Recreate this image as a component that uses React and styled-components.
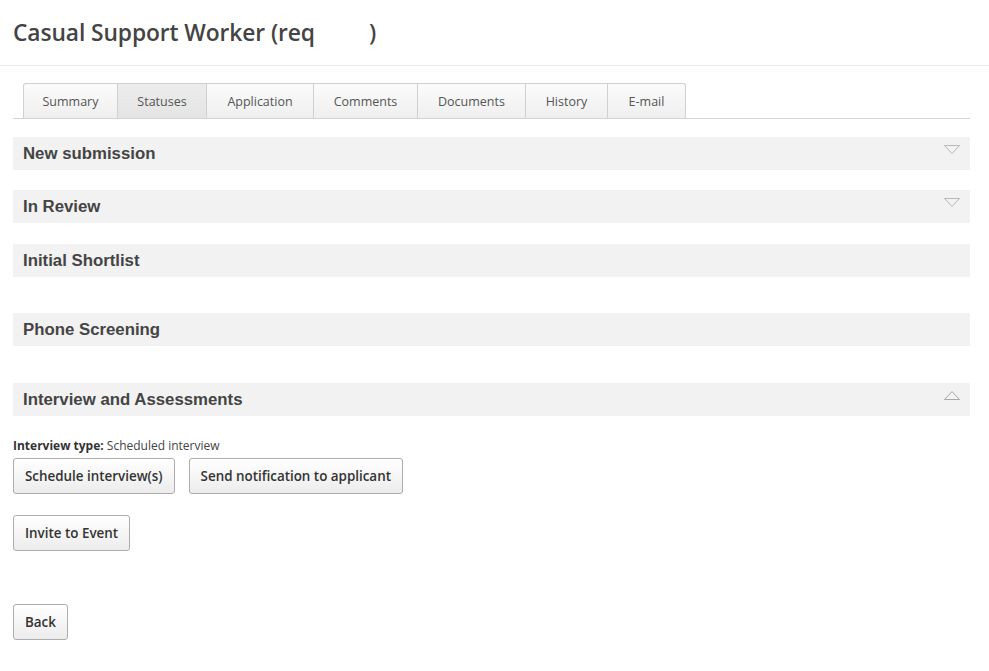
import React from "react";
import styled, { createGlobalStyle } from "styled-components";

const Global = createGlobalStyle`
  html, body { margin: 0; padding: 0; background: #fff; }
  body { font-family: "Open Sans", "Noto Sans", sans-serif; color: #444; }
`;

const Page = styled.div`
  width: 989px;
  min-height: 671px;
  box-sizing: border-box;
`;

const Header = styled.header`
  height: 66px;
  border-bottom: 1px solid #ececec;
  box-sizing: border-box;
  padding: 17px 13px 0;
`;

const Title = styled.h1`
  margin: 0;
  font-family: "Open Sans", sans-serif;
  font-weight: 600;
  font-size: 22.8px;
  line-height: 32px;
  color: #444;
  letter-spacing: -0.1px;
`;

const Hidden = styled.span`
  display: inline-block;
  width: 54px;
`;

const Body = styled.main`
  padding: 17px 19px 0 13px;
`;

const TabBar = styled.nav`
  display: flex;
  padding-left: 10px;
  border-bottom: 1px solid #d4d4d4;
  height: 35px;
`;

const Tab = styled.div`
  width: ${(p) => p.$w}px;
  box-sizing: border-box;
  display: flex;
  align-items: center;
  justify-content: center;
  border: 1px solid #d0d0d0;
  border-bottom: none;
  border-left-width: ${(p) => (p.$first ? 1 : 0)}px;
  border-radius: ${(p) => (p.$first ? "3px 0 0 0" : p.$last ? "0 3px 0 0" : "0")};
  background: ${(p) =>
    p.$active ? "linear-gradient(#ececec, #e4e4e4)" : "linear-gradient(#fbfbfb, #efefef)"};
  font-size: 12.5px;
  color: #555;
`;

const Sections = styled.div`
  display: flex;
  flex-direction: column;
  margin-top: 18px;
`;

const Section = styled.section`
  display: flex;
  flex-direction: column;
  margin-bottom: ${(p) => p.$gap}px;
`;

const SectionHead = styled.div`
  height: 33px;
  background: #f2f2f2;
  display: flex;
  align-items: center;
  justify-content: space-between;
  padding: 0 9px 0 10px;
  font-family: "Liberation Sans", Arial, sans-serif;
  font-weight: bold;
  font-size: 16.8px;
  color: #444;
`;

const Arrow = styled.svg`
  width: 18px;
  height: 11px;
  margin-top: -8px;
`;

const Content = styled.div`
  padding-top: 21px;
`;

const TypeLine = styled.div`
  font-size: 12px;
  color: #444;
  line-height: 18px;
  margin-bottom: 3px;
  b { font-weight: 700; color: #333; }
`;

const ButtonRow = styled.div`
  display: flex;
  gap: 14px;
  margin-bottom: ${(p) => p.$mb || 0}px;
`;

const Button = styled.button`
  height: 36px;
  padding: 0 11px;
  border: 1px solid #adadad;
  border-radius: 3px;
  background: linear-gradient(#ffffff, #ececec);
  font-family: "Open Sans", sans-serif;
  font-weight: 600;
  font-size: 13.4px;
  color: #333;
  cursor: pointer;
`;

const Down = () => (
  <Arrow viewBox="0 0 18 11">
    <path d="M1.5 1.5 H16.5 L9 9.5 Z" fill="none" stroke="#b8b8b8" strokeWidth="1" />
  </Arrow>
);
const Up = () => (
  <Arrow viewBox="0 0 18 11">
    <path d="M1.5 9.5 H16.5 L9 1.5 Z" fill="none" stroke="#a8a8a8" strokeWidth="1" />
  </Arrow>
);

const tabs = [
  ["Summary", 95],
  ["Statuses", 89],
  ["Application", 107],
  ["Comments", 104],
  ["Documents", 108],
  ["History", 82],
  ["E-mail", 78],
];

export default function App() {
  return (
    <Page>
      <Global />
      <Header>
        <Title>
          Casual Support Worker (req<Hidden />)
        </Title>
      </Header>
      <Body>
        <TabBar>
          {tabs.map(([t, w], i) => (
            <Tab key={t} $w={w} $first={i === 0} $last={i === tabs.length - 1} $active={t === "Statuses"}>
              {t}
            </Tab>
          ))}
        </TabBar>
        <Sections>
          <Section $gap={20}>
            <SectionHead>
              New submission <Down />
            </SectionHead>
          </Section>
          <Section $gap={21}>
            <SectionHead>
              In Review <Down />
            </SectionHead>
          </Section>
          <Section $gap={36}>
            <SectionHead>Initial Shortlist</SectionHead>
          </Section>
          <Section $gap={37}>
            <SectionHead>Phone Screening</SectionHead>
          </Section>
          <Section $gap={0}>
            <SectionHead>
              Interview and Assessments <Up />
            </SectionHead>
            <Content>
              <TypeLine>
                <b>Interview type:</b> Scheduled interview
              </TypeLine>
              <ButtonRow $mb={21}>
                <Button>Schedule interview(s)</Button>
                <Button>Send notification to applicant</Button>
              </ButtonRow>
              <ButtonRow $mb={53}>
                <Button>Invite to Event</Button>
              </ButtonRow>
              <ButtonRow>
                <Button>Back</Button>
              </ButtonRow>
            </Content>
          </Section>
        </Sections>
      </Body>
    </Page>
  );
}
